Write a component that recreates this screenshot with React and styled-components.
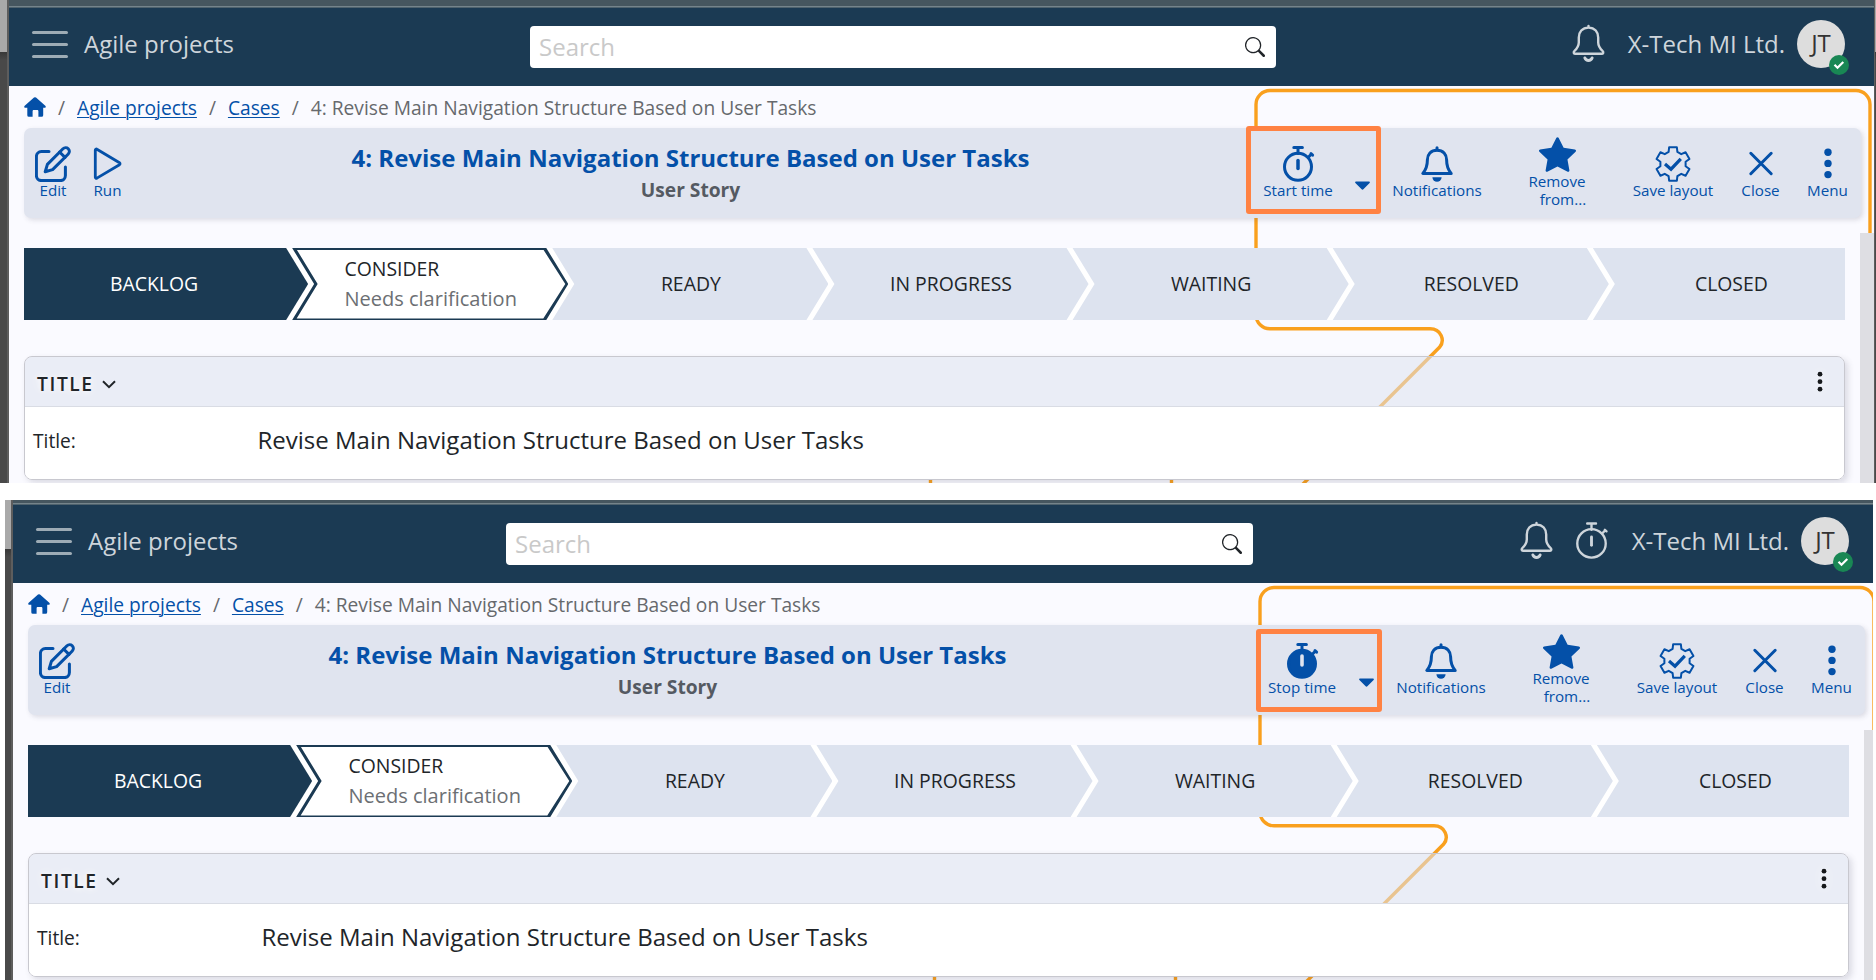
import React from "react";
import styled, { createGlobalStyle, css } from "styled-components";
import { BsSearch, BsStarFill } from "react-icons/bs";

const NAVY = "#1b3a53";
const BLUE = "#0450a8";
const ORANGE = "#f9a01e";

const GlobalStyle = createGlobalStyle`
  * { box-sizing: border-box; }
  html, body { margin: 0; padding: 0; background: #fff; overflow: hidden; }
  body { font-family: "Open Sans", "Noto Sans", sans-serif; color: #212529; }
`;

const Page = styled.main`
  display: flex;
  flex-direction: column;
  gap: 17px;
  width: 1876px;
  height: 980px;
  overflow: hidden;
  background: #fff;
`;

const Shot = styled.section`
  display: flex;
  height: ${(p) => p.$height}px;
  padding-left: ${(p) => p.$indent}px;
  flex: none;
`;

const Edge = styled.div`
  flex: none;
  width: ${(p) => p.$width}px;
  border-${(p) => p.$side}: ${(p) => (p.$width > 4 ? 2 : 1)}px solid #5d5d5d;
  background: linear-gradient(#a9a9a9 ${(p) => p.$split}px, #383838 ${(p) => p.$split}px, #494949 ${(p) => p.$split + 8}px);
`;

const Window = styled.div`
  flex: none;
  width: ${(p) => p.$width}px;
  overflow: hidden;
`;

const WindowInner = styled.div`
  width: 1865px;
  height: 100%;
  display: flex;
  flex-direction: column;
`;

const Ribbon = styled.div`
  flex: none;
  height: ${(p) => p.$height}px;
  background: #46565f;
  border-bottom: 1px solid #4f626d;
  box-shadow: inset 0 -1px #75848b;
`;

const TopBar = styled.header`
  flex: none;
  display: flex;
  align-items: flex-start;
  height: 78px;
  background: ${NAVY};
  color: #ced5db;
  font-size: 24px;
  line-height: 33px;
`;

const Burger = styled.div`
  display: flex;
  flex-direction: column;
  gap: 9px;
  width: 36px;
  margin: 23px 16px 0 23px;
  span { height: 3px; border-radius: 2px; background: #9dabb5; }
`;

const Brand = styled.div`
  margin-top: 19px;
  width: 200px;
`;

const SearchBox = styled.div`
  display: flex;
  justify-content: space-between;
  align-items: center;
  flex: none;
  width: ${(p) => p.$width}px;
  height: 42px;
  margin-top: 18px;
  margin-left: ${(p) => p.$offset}px;
  padding: 0 11px 2px 9px;
  border-radius: 4px;
  background: #fff;
  color: #c9c9c9;
  svg { color: #212529; margin-top: 2px; }
`;

const Account = styled.div`
  display: flex;
  flex: 1;
  justify-content: flex-end;
  padding-right: 29px;
  svg { flex: none; }
`;

const HeaderIcon = styled.div`
  display: flex;
  justify-content: center;
  width: 33px;
  height: 38px;
  margin: ${(p) => p.$top || 16}px ${(p) => p.$gap || 23}px 0 0;
`;

const Company = styled.div`
  margin: 19px 12px 0 0;
`;

const Avatar = styled.div`
  position: relative;
  width: 48px;
  height: 48px;
  margin-top: 12px;
  border-radius: 50%;
  background: #dddddd;
  color: #333;
  text-align: center;
  line-height: 46px;
`;

const StatusBadge = styled.span`
  position: absolute;
  right: -4px;
  bottom: -7px;
  width: 20px;
  height: 20px;
  border-radius: 50%;
  background: #198754;
  svg { display: block; }
`;

const Body = styled.div`
  position: relative;
  flex: 1;
  min-height: 0;
  background: #fafaff;
  overflow: hidden;
  padding: 0 0 0 15px;
`;

const Wire = styled.svg`
  position: absolute;
  left: 0;
  top: 0;
`;

const ScrollTrack = styled.div`
  position: absolute;
  right: 0;
  top: 147px;
  bottom: 0;
  width: 14px;
  background: #dedee3;
`;

const Crumbs = styled.nav`
  position: relative;
  display: flex;
  align-items: center;
  height: 42px;
  padding-top: 1px;
  font-size: 19.2px;
  color: #66696d;
  text-shadow: 0 0 6px #fff;
  a { color: ${BLUE}; text-decoration: underline; text-underline-offset: 2px; text-decoration-thickness: 1px; }
  svg { margin-bottom: 1px; }
`;

const Slash = styled.span`
  width: 31px;
  text-align: center;
`;

const Toolbar = styled.div`
  position: relative;
  display: flex;
  width: 1837px;
  height: 90px;
  padding-left: 5px;
  border-radius: 7px;
  background: #e0e4ef;
  box-shadow: 2px 2px 5px rgba(60, 60, 90, 0.16);
`;

const Tool = styled.div`
  flex: none;
  display: flex;
  flex-direction: column;
  align-items: center;
  width: ${(p) => p.$width}px;
  padding-top: ${(p) => p.$top ?? 18}px;
  padding-left: ${(p) => p.$left || 0}px;
  color: ${BLUE};
  font-size: 15.2px;
  line-height: 18px;
  white-space: pre;
  text-align: center;
  svg { display: block; margin-bottom: -1px; flex: none; }
`;

const CaretSlot = styled.div`
  flex: none;
  width: 33px;
  padding: 53px 0 0 9px;
  svg { display: block; }
`;

const Heading = styled.div`
  flex: 1;
  text-align: center;
  font-weight: 700;
  padding: 13px 0 0;
  h1 { margin: 0; font-size: 24px; line-height: 33px; color: ${BLUE}; white-space: nowrap; }
  p { margin: 3px 0 0; font-size: 19.2px; line-height: 26px; color: #555a62; }
`;

const Highlight = styled.div`
  position: absolute;
  left: ${(p) => p.$left}px;
  top: ${(p) => p.$top}px;
  width: ${(p) => p.$width}px;
  height: ${(p) => p.$height}px;
  border: 5px solid #ff8243;
  border-radius: 3px;
`;

const Steps = styled.div`
  position: relative;
  display: grid;
  grid-template-columns: repeat(7, 1fr);
  width: 1821px;
  height: 72px;
  margin-top: 30px;
  background: #fff;
  font-size: 19.4px;
  line-height: 30px;
`;

const stepShapes = {
  first: "polygon(0 0, calc(100% - 22px) 0, 100% 50%, calc(100% - 22px) 100%, 0 100%)",
  middle: "polygon(8px 0, calc(100% - 22px) 0, 100% 50%, calc(100% - 22px) 100%, 8px 100%, 30px 50%)",
  last: "polygon(8px 0, 100% 0, 100% 100%, 8px 100%, 30px 50%)",
};

const Step = styled.div`
  position: relative;
  display: flex;
  align-items: center;
  justify-content: center;
  margin-right: ${(p) => (p.$shape === "last" ? 0 : -24)}px;
  padding: 0 ${(p) => (p.$shape === "last" ? 0 : 24)}px 0 ${(p) => (p.$shape === "first" ? 0 : 33)}px;
  clip-path: ${(p) => stepShapes[p.$shape]};
  background: ${(p) => (p.$tone ? NAVY : "#dde3ef")};
  color: ${(p) => (p.$tone === "done" ? "#fff" : "#212529")};
  ${(p) =>
    p.$tone === "current" &&
    css`
      &::before {
        content: "";
        position: absolute;
        inset: 1.5px 0;
        background: #fff;
        clip-path: polygon(12.5px 0, calc(100% - 25px) 0, calc(100% - 3px) 50%, calc(100% - 25px) 100%, 12.5px 100%, 33.5px 50%);
      }
    `}
`;

const StepText = styled.div`
  position: relative;
  small { display: block; font-size: 20px; color: #6c6f73; }
`;

const Card = styled.div`
  position: relative;
  width: 1821px;
  height: 124px;
  margin-top: 36px;
  border: 1px solid #c8c8cf;
  border-radius: 8px;
  box-shadow: 3px 3px 6px rgba(60, 60, 90, 0.16);
  overflow: hidden;
`;

const CardHead = styled.div`
  display: flex;
  align-items: center;
  height: 50px;
  padding: 0 21px 0 12px;
  background: rgba(221, 226, 239, 0.55);
  border-bottom: 1px solid #d9dce4;
  font-size: 19.2px;
  font-weight: 600;
  letter-spacing: 1.6px;
  text-shadow: 0 0 5px #fff, 0 0 12px #fff;
  span { margin: 4px 8px 0 0; }
  svg { margin-top: 6px; }
  svg:last-child { margin: 1px 0 0 auto; filter: drop-shadow(0 0 6px #fff); }
`;

const FieldRow = styled.div`
  display: flex;
  align-items: center;
  height: 73px;
  padding: 0 0 6px 8px;
  background: #fff;
  font-size: 19.2px;
`;

const FieldValue = styled.span`
  font-size: 24px;
  margin-bottom: 2px;
`;

const FieldLabel = styled.span`
  width: 224.5px;
`;

const HomeIcon = () => (
  <svg width="22" height="20" viewBox="0 0 22 20" fill={BLUE}>
    <path d="M10 .6a1.5 1.5 0 0 1 2 0l9.3 8.2c.9.8.4 1.9-.6 1.9h-1.5v7.5a1.6 1.6 0 0 1-1.6 1.6h-3.2v-5.6c0-.8-.5-1.3-1.2-1.3H9.8c-.7 0-1.2.5-1.2 1.3v5.6H4.9a1.6 1.6 0 0 1-1.6-1.6v-7.5H1.3c-1 0-1.5-1.1-.6-1.9z" />
  </svg>
);

const EditIcon = () => (
  <svg width="36" height="36" viewBox="0 0 36 36" fill="none" stroke={BLUE} strokeWidth="3" strokeLinecap="round" strokeLinejoin="round">
    <path d="M14 5.600H6.400a5 5 0 0 0-5 5v19a5 5 0 0 0 5 5h19a5 5 0 0 0 5-5V21" />
    <path d="M10.200 25.800l2.200-7.400L28 2.800a3.600 3.600 0 0 1 5.300 5.200L17.600 23.600z" />
    <path d="M24.600 6l5.400 5.400" />
  </svg>
);

const RunIcon = () => (
  <svg width="36" height="36" viewBox="0 0 36 36" fill="none" stroke={BLUE} strokeWidth="2.8" strokeLinejoin="round">
    <path d="M5.300 4.100v27.200a1 1 0 0 0 1.600.8l22.600-13.400a1.200 1.200 0 0 0 0-2L6.900 3.200a1 1 0 0 0-1.600.9z" />
  </svg>
);

const TimerIcon = ({ color = BLUE, weight = 3, filled = false, size = 36 }) => (
  <svg width={size} height={size} viewBox="0 0 36 36" fill="none" stroke={color} strokeWidth={weight} strokeLinecap="round">
    <path d="M13.800 1.500h8.600M18 1.500v6M28.600 11l2.600-2.800M31 7.600l1.600 1.500" />
    <circle cx="18" cy="20.800" r={15 - weight / 2} fill={filled ? color : "none"} />
    <path d={filled ? "M18 13v9" : "M18 14.600v8"} stroke={filled ? "#e0e4ef" : color} strokeWidth={filled ? 3.6 : weight + 0.5} />
  </svg>
);

const BellIcon = () => (
  <svg width="36" height="36" viewBox="0 0 36 36" fill="none" stroke={BLUE} strokeWidth="3" strokeLinejoin="round">
    <path d="M18 4.200c-6.200 0-9.600 4.400-9.600 9.600 0 6.600-1.400 10-4.600 13.600h28.400c-3.200-3.600-4.600-7-4.600-13.600 0-5.200-3.400-9.600-9.600-9.600z" />
    <path d="M18 4V1.800" strokeLinecap="round" />
    <path d="M13.400 31.200h9.200a4.600 4.600 0 0 1-9.200 0z" fill={BLUE} stroke="none" />
  </svg>
);

const HeaderBell = () => (
  <svg width="33" height="38" viewBox="0 0 33 38" fill="none" stroke="#ced5db" strokeWidth="2.400" strokeLinecap="round" strokeLinejoin="round">
    <path d="M16.500 3.600c-6.400 0-9.700 4.600-9.700 9.800v5c0 3.600-1.800 6-4.400 8.600-1.300 1.400-.6 2.800 1 2.800h26.200c1.600 0 2.300-1.400 1-2.800-2.600-2.600-4.400-5-4.400-8.600v-5c0-5.200-3.300-9.800-9.700-9.800zM16.500 3.400V2" />
    <path d="M12.900 34c1.300 3.200 5.900 3.200 7.200 0" strokeWidth="3" />
  </svg>
);

const gearPoints = Array.from({ length: 6 }, (_, i) =>
  [[-20, 12.8], [-13, 17.2], [13, 17.2], [20, 12.8]].map(([a, r]) => {
    const t = ((i * 60 + a) * Math.PI) / 180;
    return `${(18 + r * Math.sin(t)).toFixed(2)},${(18 - r * Math.cos(t)).toFixed(2)}`;
  }).join(" ")
).join(" ");

const GearCheckIcon = () => (
  <svg width="36" height="36" viewBox="0 0 36 36" fill="none" stroke={BLUE}>
    <polygon points={gearPoints} strokeWidth="2" strokeLinejoin="round" />
    <path d="M10 18l6 5.200 9.800-10.400" strokeWidth="3.200" />
  </svg>
);

const CloseIcon = () => (
  <svg width="36" height="36" viewBox="0 0 36 36" stroke={BLUE} strokeWidth="3" strokeLinecap="round">
    <path d="M7.800 7.300l20.400 20.400M28.200 7.300L7.800 27.700" />
  </svg>
);

const DotsIcon = () => (
  <svg width="36" height="36" viewBox="0 0 36 36" fill={BLUE}>
    <circle cx="18" cy="6.200" r="3.700" />
    <circle cx="18" cy="17.400" r="3.700" />
    <circle cx="18" cy="28.600" r="3.700" />
  </svg>
);

const steps = ["BACKLOG", "CONSIDER", "READY", "IN PROGRESS", "WAITING", "RESOLVED", "CLOSED"];
const caseName = "Revise Main Navigation Structure Based on User Tasks";

function AppWindow({ running, ribbon, width, search, mark }) {
  return (
    <Window $width={width}>
      <WindowInner>
        <Ribbon $height={ribbon} />
        <TopBar>
          <Burger><span /><span /><span /></Burger>
          <Brand>Agile projects</Brand>
          <SearchBox {...search}>
            Search
            <BsSearch size={20} />
          </SearchBox>
          <Account>
            <HeaderIcon $gap={running ? 22 : 23}><HeaderBell /></HeaderIcon>
            {running && (
              <HeaderIcon $top={17} $gap={24}>
                <TimerIcon color="#ced5db" weight={2.3} size={37} />
              </HeaderIcon>
            )}
            <Company>X-Tech MI Ltd.</Company>
            <Avatar>
              JT
              <StatusBadge>
                <svg width="20" height="20" viewBox="0 0 20 20" fill="none" stroke="#fff" strokeWidth="2.200">
                  <path d="M5.500 9.800l3 3L14.300 7" />
                </svg>
              </StatusBadge>
            </Avatar>
          </Account>
        </TopBar>
        <Body>
          <Wire width="1865" height="397" fill="none" stroke={ORANGE} strokeWidth="3.400">
            <path d="M1861 160V18.500a14 14 0 0 0-14-14H1261a14 14 0 0 0-14 14V229a14 14 0 0 0 14 13.800H1421c11 0 15.500 11.500 9.500 18.500L1291 401M921.500 391v10M1162.500 391v10" />
          </Wire>
          <ScrollTrack />
          <Crumbs>
            <HomeIcon />
            <Slash>/</Slash>
            <a>Agile projects</a>
            <Slash>/</Slash>
            <a>Cases</a>
            <Slash>/</Slash>
            <span>4: {caseName}</span>
          </Crumbs>
          <Toolbar>
            <Tool $width={48}><EditIcon />Edit</Tool>
            {!running && <Tool $width={54} $left={7}><RunIcon />Run</Tool>}
            <Heading>
              <h1>4: {caseName}</h1>
              <p>User Story</p>
            </Heading>
            <Tool $width={96}><TimerIcon filled={running} />{running ? "Stop time" : "Start time"}</Tool>
            <CaretSlot>
              <svg width="15" height="9" viewBox="0 0 15 9" fill={BLUE}>
                <path d="M1 .4h13c.9 0 1.200.9.600 1.500L8.600 8.100a1.500 1.500 0 0 1-2.200 0L.4 1.900C-.2 1.300.1.400 1 .400z" />
              </svg>
            </CaretSlot>
            <Tool $width={116}><BellIcon />Notifications</Tool>
            <Tool $width={124} $top={8}><BsStarFill size={37} />{"Remove\n   from..."}</Tool>
            <Tool $width={108}><GearCheckIcon />Save layout</Tool>
            <Tool $width={67}><CloseIcon />Close</Tool>
            <Tool $width={67}><DotsIcon />Menu</Tool>
            <Highlight {...mark} />
          </Toolbar>
          <Steps>
            {steps.map((name, i) => (
              <Step
                key={name}
                $shape={i === 0 ? "first" : i === 6 ? "last" : "middle"}
                $tone={i === 0 ? "done" : i === 1 ? "current" : undefined}
              >
                <StepText>
                  {name}
                  {i === 1 && <small>Needs clarification</small>}
                </StepText>
              </Step>
            ))}
          </Steps>
          <Card>
            <CardHead>
              <span>TITLE</span>
              <svg width="14" height="9" viewBox="0 0 14 9" fill="none" stroke="#212529" strokeWidth="2">
                <path d="M1 1.200l6 6 6-6" />
              </svg>
              <svg width="6" height="22" viewBox="0 0 6 22" fill="#16181b">
                <circle cx="3" cy="3.200" r="2.400" />
                <circle cx="3" cy="10.700" r="2.400" />
                <circle cx="3" cy="18.200" r="2.400" />
              </svg>
            </CardHead>
            <FieldRow>
              <FieldLabel>Title:</FieldLabel>
              <FieldValue>{caseName}</FieldValue>
            </FieldRow>
          </Card>
        </Body>
      </WindowInner>
    </Window>
  );
}

export default function App() {
  return (
    <>
      <GlobalStyle />
      <Page>
        <Shot $height={483} $indent={0}>
          <Edge $width={9} $split={52} $side="right" />
          <AppWindow
            ribbon={8}
            width={1865}
            search={{ $offset: 246, $width: 746 }}
            mark={{ $left: 1222, $top: -2, $width: 135, $height: 88 }}
          />
          <Edge $width={2} $split={52} $side="left" />
        </Shot>
        <Shot $height={480} $indent={5}>
          <Edge $width={8} $split={49} $side="right" />
          <AppWindow
            running
            ribbon={5}
            width={1860}
            search={{ $offset: 218, $width: 747 }}
            mark={{ $left: 1228, $top: 4, $width: 126, $height: 83 }}
          />
        </Shot>
      </Page>
    </>
  );
}
